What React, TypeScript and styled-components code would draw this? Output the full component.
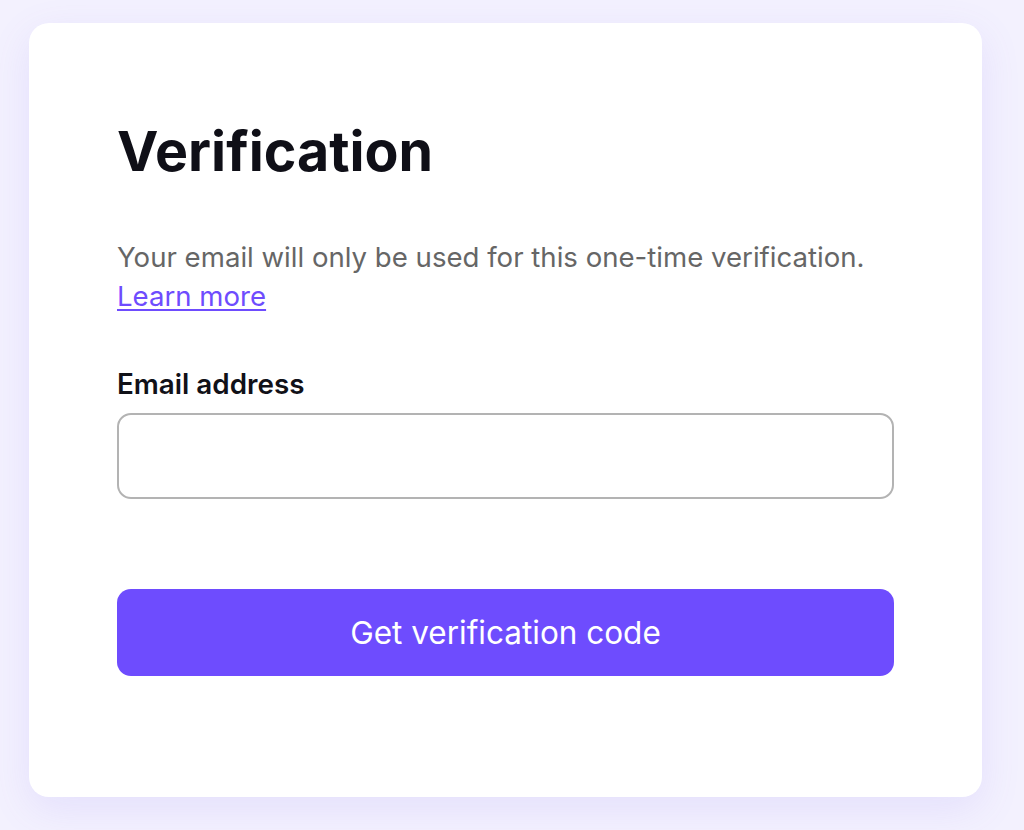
import React from 'react';
import styled, { createGlobalStyle } from 'styled-components';

const GlobalStyle = createGlobalStyle`
  html, body {
    margin: 0;
    padding: 0;
    background: #f3f1fe;
    font-family: Inter, "Noto Sans", sans-serif;
  }
`;

const Page = styled.main`
  min-height: 830px;
  padding: 23px 42px 0 29px;
  box-sizing: border-box;
`;

const Card = styled.section`
  width: 953px;
  height: 774px;
  box-sizing: border-box;
  padding: 88px 88px 0;
  background: #ffffff;
  border-radius: 20px;
  box-shadow: 0 12px 40px rgba(120, 96, 240, 0.12);
`;

const Title = styled.h1`
  margin: 0;
  font-size: 55.5px;
  font-weight: 700;
  line-height: 80px;
  color: #0f0f17;
`;

const Lead = styled.p`
  margin: 47px 0 0;
  font-size: 27.6px;
  line-height: 39px;
  color: #666666;
`;

const Link = styled.a`
  color: #6e4cfe;
  text-decoration: underline;
  text-underline-offset: 3px;
  cursor: pointer;
`;

const Field = styled.label`
  display: flex;
  flex-direction: column;
  gap: 13px;
  margin-top: 52px;
`;

const LabelText = styled.span`
  font-size: 27.8px;
  font-weight: 600;
  line-height: 32px;
  color: #111118;
`;

const Input = styled.input`
  height: 86px;
  box-sizing: border-box;
  border: 2px solid #b3b3b3;
  border-radius: 14px;
  padding: 0 20px;
  font: inherit;
  font-size: 26px;
  outline: none;
  background: #fff;
`;

const Button = styled.button`
  display: block;
  width: 100%;
  height: 87px;
  margin-top: 90px;
  border: none;
  border-radius: 14px;
  background: #6e4cfe;
  color: #ffffff;
  font-family: inherit;
  font-size: 31.5px;
  font-weight: 400;
  cursor: pointer;
`;

export default function App() {
  return (
    <>
      <GlobalStyle />
      <Page>
        <Card>
          <Title>Verification</Title>
          <Lead>
            Your email will only be used for this one-time verification.
            <br />
            <Link>Learn more</Link>
          </Lead>
          <Field>
            <LabelText>Email address</LabelText>
            <Input type="email" />
          </Field>
          <Button>Get verification code</Button>
        </Card>
      </Page>
    </>
  );
}
